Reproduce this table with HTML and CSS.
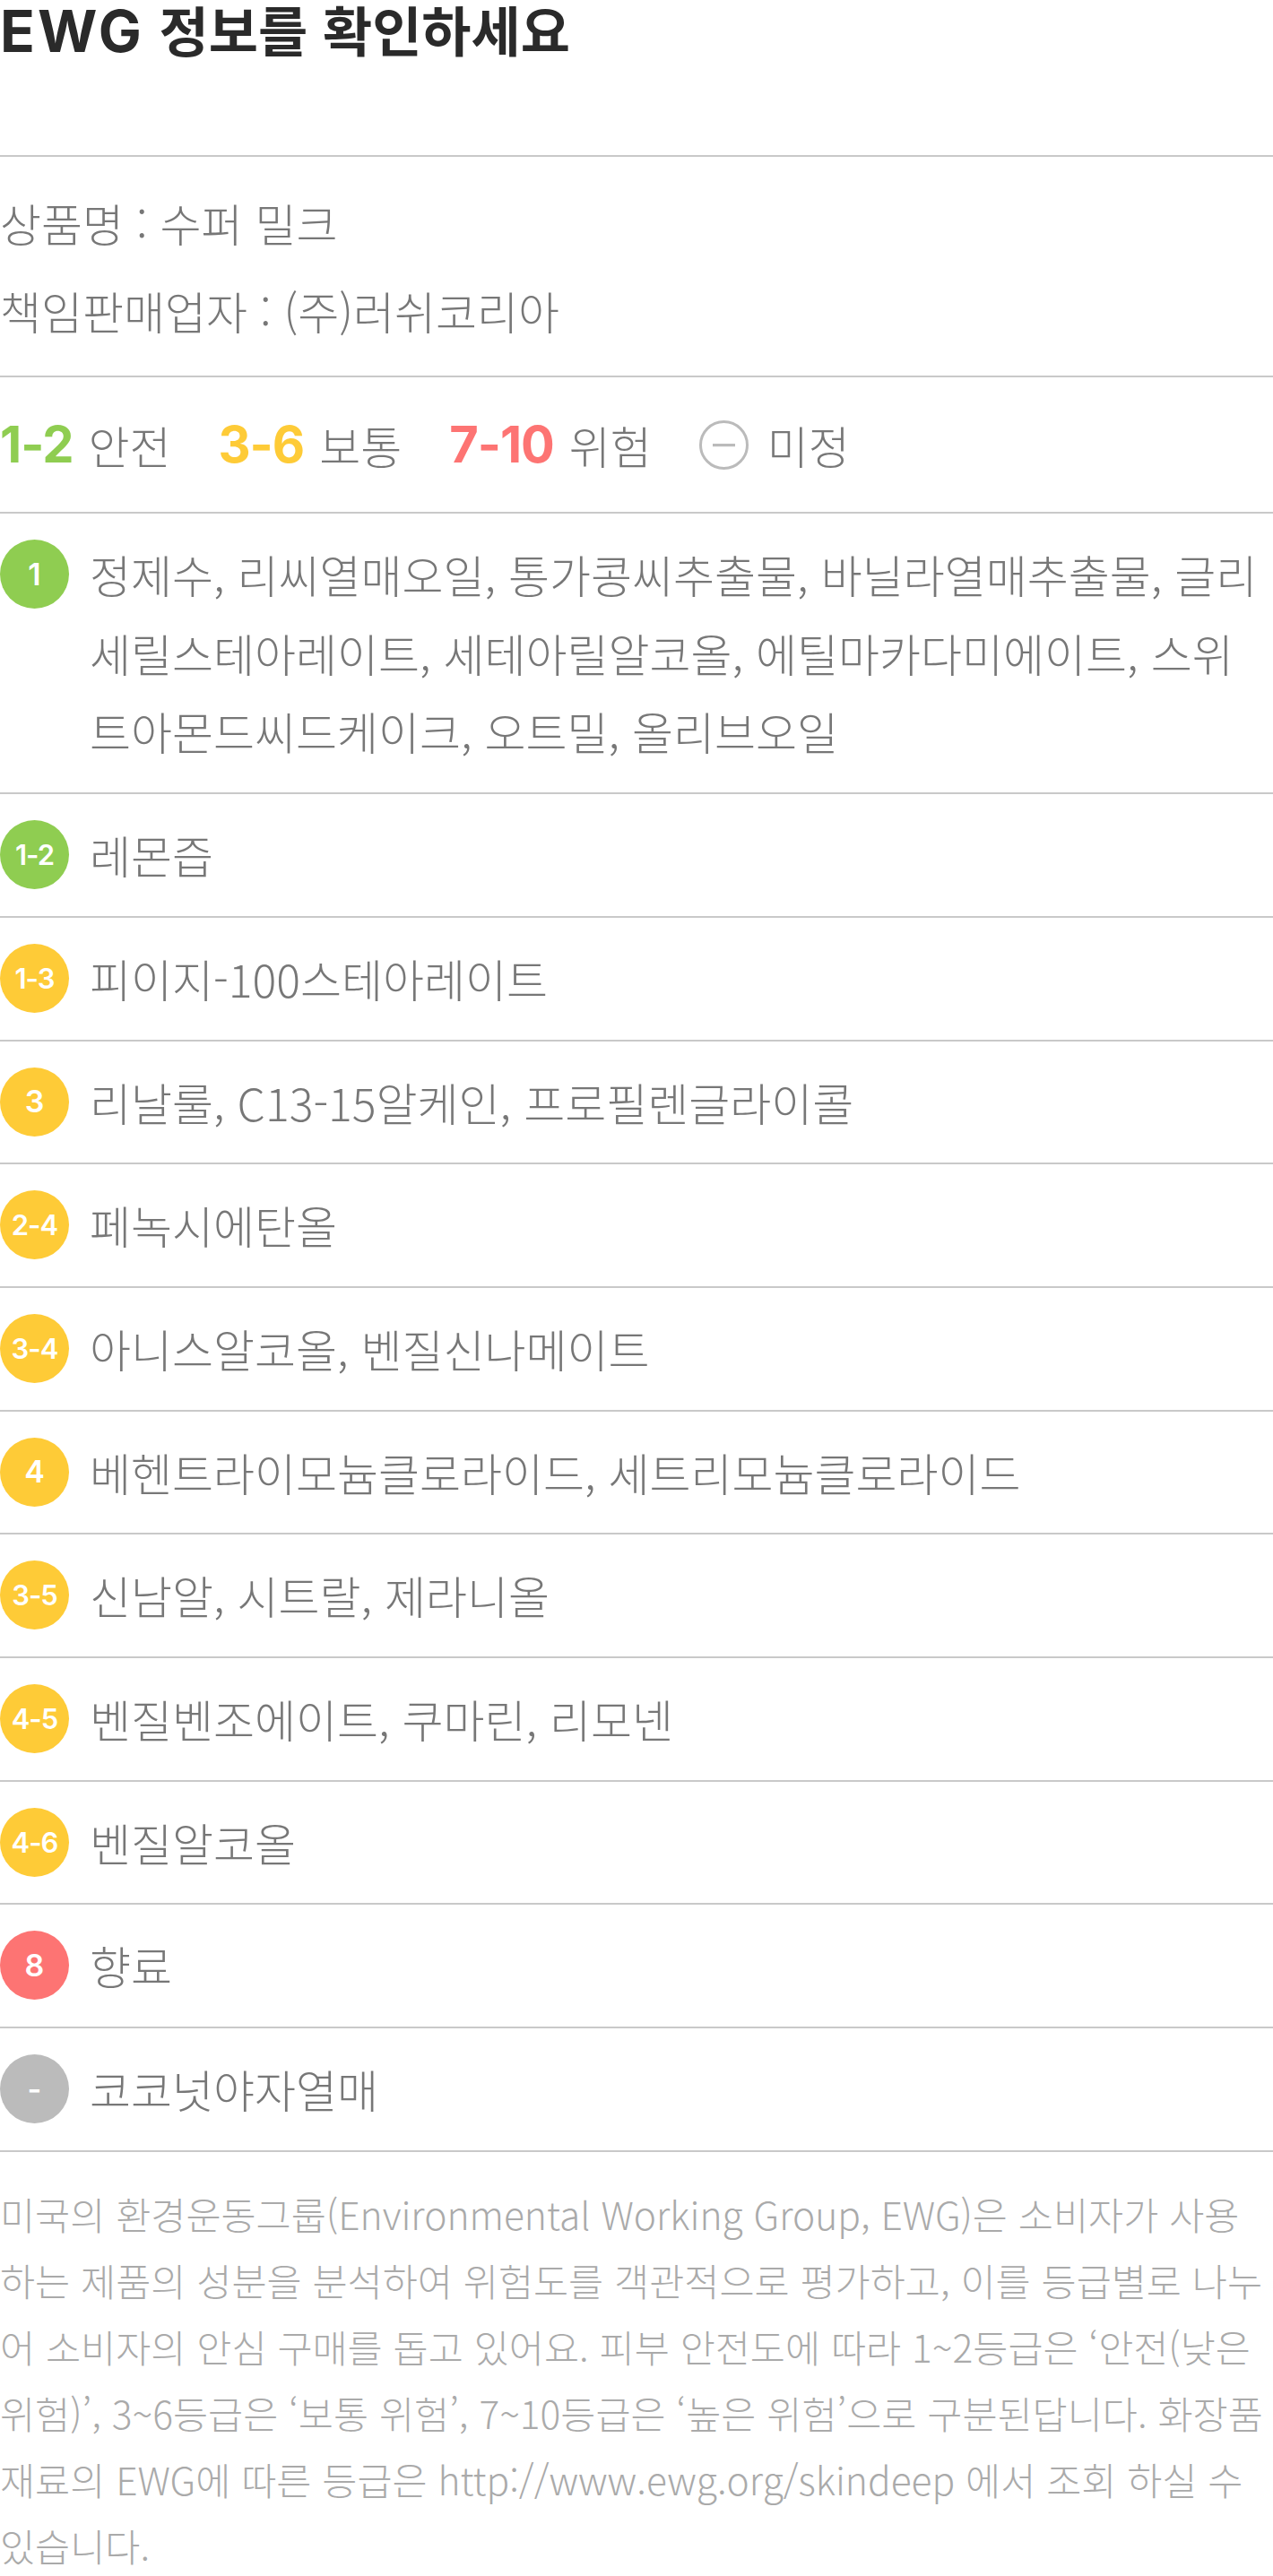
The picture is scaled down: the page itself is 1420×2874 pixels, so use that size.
FILE: index.html
```html
<!DOCTYPE html>
<html lang="ko">
<head>
<meta charset="utf-8">
<title>EWG 정보를 확인하세요</title>
<link rel="stylesheet" href="styles.css">
</head>
<body>
<section class="ewg">
  <h2 class="ewg-title"><span class="ewg-title__latin">EWG</span> 정보를 확인하세요</h2>

  <div class="ewg-product">
    <p class="ewg-product__line">상품명 : 수퍼 밀크</p>
    <p class="ewg-product__line">책임판매업자 : (주)러쉬코리아</p>
  </div>

  <ul class="ewg-legend">
    <li class="legend-item"><span class="legend-num legend-num--safe">1-2</span><span class="legend-label">안전</span></li>
    <li class="legend-item"><span class="legend-num legend-num--mid">3-6</span><span class="legend-label">보통</span></li>
    <li class="legend-item"><span class="legend-num legend-num--high">7-10</span><span class="legend-label">위험</span></li>
    <li class="legend-item legend-item--none">
      <svg class="legend-icon" viewBox="0 0 55 55" width="55" height="55" aria-hidden="true">
        <circle cx="27.5" cy="27.5" r="26" fill="none" stroke="#bbbbbb" stroke-width="3"/>
        <rect x="15" y="26" width="25" height="3.2" fill="#bbbbbb"/>
      </svg>
      <span class="legend-label legend-label--icon">미정</span>
    </li>
  </ul>

  <ul class="ewg-list">
    <li class="ewg-item"><span class="badge badge--safe">1</span><p class="ewg-item__text">정제수, 리씨열매오일, 통가콩씨추출물, 바닐라열매추출물, 글리세릴스테아레이트, 세테아릴알코올, 에틸마카다미에이트, 스위트아몬드씨드케이크, 오트밀, 올리브오일</p></li>
    <li class="ewg-item"><span class="badge badge--safe badge--range">1-2</span><p class="ewg-item__text">레몬즙</p></li>
    <li class="ewg-item"><span class="badge badge--mid badge--range">1-3</span><p class="ewg-item__text">피이지-100스테아레이트</p></li>
    <li class="ewg-item"><span class="badge badge--mid">3</span><p class="ewg-item__text">리날룰, C13-15알케인, 프로필렌글라이콜</p></li>
    <li class="ewg-item"><span class="badge badge--mid badge--range">2-4</span><p class="ewg-item__text">페녹시에탄올</p></li>
    <li class="ewg-item"><span class="badge badge--mid badge--range">3-4</span><p class="ewg-item__text">아니스알코올, 벤질신나메이트</p></li>
    <li class="ewg-item"><span class="badge badge--mid">4</span><p class="ewg-item__text">베헨트라이모늄클로라이드, 세트리모늄클로라이드</p></li>
    <li class="ewg-item"><span class="badge badge--mid badge--range">3-5</span><p class="ewg-item__text">신남알, 시트랄, 제라니올</p></li>
    <li class="ewg-item"><span class="badge badge--mid badge--range">4-5</span><p class="ewg-item__text">벤질벤조에이트, 쿠마린, 리모넨</p></li>
    <li class="ewg-item"><span class="badge badge--mid badge--range">4-6</span><p class="ewg-item__text">벤질알코올</p></li>
    <li class="ewg-item"><span class="badge badge--high">8</span><p class="ewg-item__text">향료</p></li>
    <li class="ewg-item"><span class="badge badge--none">-</span><p class="ewg-item__text">코코넛야자열매</p></li>
  </ul>

  <p class="ewg-note">미국의 환경운동그룹(Environmental Working Group, EWG)은 소비자가 사용하는 제품의 성분을 분석하여 위험도를 객관적으로 평가하고, 이를 등급별로 나누어 소비자의 안심 구매를 돕고 있어요. 피부 안전도에 따라 1~2등급은 ‘안전(낮은 위험)’, 3~6등급은 ‘보통 위험’, 7~10등급은 ‘높은 위험’으로 구분된답니다. 화장품 재료의 EWG에 따른 등급은 http://www.ewg.org/skindeep 에서 조회 하실 수 있습니다.</p>
</section>
</body>
</html>
```

FILE: styles.css
```css
html, body {
  margin: 0;
  padding: 0;
  background: #ffffff;
}

body {
  font-family: "Noto Sans CJK KR", "Noto Sans", sans-serif;
  color: #777777;
}

.ewg {
  width: 1420px;
}

.ewg-title {
  margin: 0 0 106px;
  font-size: 60px;
  line-height: 64px;
  font-weight: 700;
  color: #2a2a2a;
}

.ewg-title__latin {
  font-family: "Inter", "Noto Sans", sans-serif;
  font-size: 64px;
  font-weight: 700;
  letter-spacing: 3px;
}

.ewg-product {
  border-top: 2px solid #c9c9c9;
  padding: 24px 0;
}

.ewg-product__line {
  margin: 0;
  font-size: 50px;
  line-height: 98px;
  font-weight: 300;
  color: #777777;
}

.ewg-legend {
  list-style: none;
  margin: 0;
  padding: 24px 0;
  border-top: 2px solid #c9c9c9;
  height: 102px;
  display: flex;
  align-items: center;
  gap: 53px;
}

.legend-item {
  display: flex;
  align-items: center;
  gap: 17px;
}

.legend-num {
  font-family: "Inter", "Noto Sans", sans-serif;
  font-weight: 700;
  font-size: 56px;
  line-height: 1;
  letter-spacing: -1px;
}

.legend-num--safe { color: #8fcd51; }
.legend-num--mid { color: #fecb37; }
.legend-num--high { color: #fd7473; }

.legend-label {
  font-size: 50px;
  font-weight: 300;
  line-height: 1;
  color: #777777;
}

.legend-label--icon {
  margin-left: 4px;
}

.legend-icon {
  display: block;
}

.ewg-list {
  list-style: none;
  margin: 0;
  padding: 0;
}

.ewg-item {
  display: flex;
  align-items: flex-start;
  border-top: 2px solid #c9c9c9;
  padding: 24px 14px 24px 0;
}

.badge {
  flex: 0 0 77px;
  width: 77px;
  height: 77px;
  margin: 5px 23px 0 0;
  border-radius: 50%;
  display: flex;
  align-items: center;
  justify-content: center;
  color: #ffffff;
  font-family: "Inter", "Noto Sans", sans-serif;
  font-weight: 600;
  font-size: 34px;
  line-height: 1;
}

.badge--range {
  font-size: 31px;
  letter-spacing: -1px;
}

.badge--safe { background: #8fcd51; }
.badge--mid { background: #fecb37; }
.badge--high { background: #fd7473; }
.badge--none { background: #bbbbbb; }

.ewg-item__text {
  margin: 0;
  flex: 1 1 auto;
  font-size: 50px;
  line-height: 87.7px;
  font-weight: 300;
  color: #777777;
}

.ewg-note {
  margin: 0;
  border-top: 2px solid #c9c9c9;
  padding: 32px 5px 0 0;
  font-size: 42.5px;
  line-height: 74px;
  font-weight: 300;
  color: #aaaaaa;
}
```
